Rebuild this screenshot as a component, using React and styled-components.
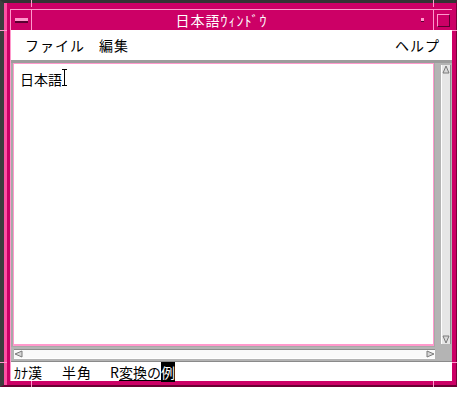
import React from 'react';
import styled, { createGlobalStyle } from 'styled-components';

const Global = createGlobalStyle`
  html, body { margin: 0; padding: 0; background: #fff; }
  body { font-family: "Noto Sans CJK JP", "Noto Sans", sans-serif; }
`;

const MAG = '#cc0066';
const PINK = '#ff99cc';

const Frame = styled.div`
  position: relative;
  box-sizing: border-box;
  width: 457px;
  height: 387px;
  border-top: 3px solid #333;
  border-left: 4px solid #3d3d3d;
  border-right: 1px solid #7a0038;
  border-bottom: 2px solid #6a0033;
  background: linear-gradient(to right, #ff4fa3 0 3px, ${MAG} 3px);
  padding: 6px 4px 4px 6px;
  display: flex;
`;

const Tick = styled.span`
  position: absolute;
  background: ${PINK};
  ${(p) => (p.$v ? `width:1px; height:${p.$len}px;` : `height:1px; width:${p.$len}px;`)}
  left: ${(p) => p.$x}px;
  top: ${(p) => p.$y}px;
`;

const Inner = styled.div`
  flex: 1;
  min-width: 0;
  display: flex;
  flex-direction: column;
  border-top: 1px solid ${PINK};
  border-left: 1px solid ${PINK};
`;

const TitleBar = styled.div`
  height: 20px;
  display: flex;
  background: ${MAG};
`;

const WinMenuBtn = styled.div`
  width: 20px;
  border-right: 1px solid ${PINK};
  display: flex;
  align-items: center;
  justify-content: center;
`;

const MenuGlyph = styled.span`
  width: 13px;
  height: 3px;
  background: ${PINK};
  border-bottom: 2px solid #5a0030;
`;

const Title = styled.div`
  flex: 1;
  color: #fff;
  font-size: 14px;
  line-height: 20px;
  text-align: center;
  letter-spacing: 1px;
`;

const MinBtn = styled.div`
  width: 22px;
  border-right: 1px solid ${PINK};
  display: flex;
  align-items: center;
  justify-content: center;
`;

const Dot = styled.span`
  width: 3px;
  height: 3px;
  background: ${PINK};
  border-bottom: 1px solid #5a0030;
`;

const MaxBtn = styled.div`
  flex: 0 0 18px;
  display: flex;
  align-items: center;
  justify-content: center;
`;

const Square = styled.span`
  width: 11px;
  height: 11px;
  border: 1px solid ${PINK};
  border-right-color: #5a0030;
  border-bottom-color: #5a0030;
`;

const MenuBar = styled.div`
  height: 30px;
  background: #fff;
  display: flex;
  align-items: center;
  padding: 0 12px 0 14px;
  gap: 14px;
  font-size: 14px;
  letter-spacing: 1px;
  color: #000;
`;

const MenuItem = styled.span`
  margin-left: ${(p) => (p.$right ? 'auto' : '0')};
`;

const Separator = styled.div`
  height: 3px;
  background: #9c9c9c;
`;

const Client = styled.div`
  flex: 1;
  display: grid;
  grid-template-columns: 1fr 17px;
  grid-template-rows: 1fr 14px;
  background: #b4b4b4;
  min-height: 0;
`;

const TextWrap = styled.div`
  padding: 0 1px 1px 2px;
  background: #a8a8a8;
  display: flex;
`;

const TextArea = styled.div`
  flex: 1;
  background: #fff;
  border: 1px solid ${PINK};
  border-bottom-width: 2px;
  padding: 6px 6px;
  font-size: 14px;
  line-height: 18px;
  color: #000;
  display: flex;
  align-items: flex-start;
`;

const Cursor = styled.svg`
  display: block;
  margin-top: -1px;
`;

const VScroll = styled.div`
  display: flex;
  justify-content: flex-end;
  padding: 2px 1px 3px 0;
`;

const VTrough = styled.div`
  width: 8px;
  background: #e6e6e6;
  border-left: 1px solid #fff;
  border-right: 1px solid #8c8c8c;
  display: flex;
  flex-direction: column;
  justify-content: space-between;
  align-items: center;
`;

const HScroll = styled.div`
  display: flex;
  align-items: center;
  padding: 0 0 0 3px;
`;

const HTrough = styled.div`
  flex: 1;
  height: 8px;
  background: #fafafa;
  border-top: 1px solid #8c8c8c;
  border-bottom: 1px solid #fff;
  display: flex;
  align-items: center;
  justify-content: space-between;
`;

const Corner = styled.div`
  background: #b4b4b4;
`;

const StatusBar = styled.div`
  height: 19px;
  border-top: 1px solid #8a8a8a;
  background: #fff;
  display: flex;
  align-items: center;
  padding-left: 3px;
  font-size: 14px;
  color: #000;
  white-space: nowrap;
`;

const Seg = styled.span`
  width: ${(p) => p.$w}px;
  flex: 0 0 auto;
  letter-spacing: ${(p) => p.$ls || 0}px;
`;

const Under = styled.span`
  text-decoration: underline;
  text-underline-offset: 2px;
`;

const Inverse = styled.span`
  background: #000;
  color: #fff;
`;

function Arrow({ dir }) {
  const pts = {
    up: '4,1 7,8 1,8',
    down: '1,1 7,1 4,8',
    left: '1,4 8,1 8,7',
    right: '8,4 1,1 1,7',
  }[dir];
  return (
    <svg width="9" height="9" viewBox="0 0 9 9">
      <polygon points={pts} fill="#d8d8d8" stroke="#7a7a7a" strokeWidth="1" />
    </svg>
  );
}

export default function App() {
  return (
    <>
      <Global />
      <Frame>
        <Tick $v $len={7} $x={27} $y={-3} />
        <Tick $v $len={7} $x={429} $y={-3} />
        <Tick $v $len={6} $x={27} $y={378} />
        <Tick $v $len={6} $x={429} $y={378} />
        <Tick $len={7} $x={-4} $y={27} />
        <Tick $len={7} $x={-4} $y={359} />
        <Tick $len={5} $x={448} $y={27} />
        <Tick $len={5} $x={448} $y={359} />
        <Inner>
          <TitleBar>
            <WinMenuBtn><MenuGlyph /></WinMenuBtn>
            <Title>日本語ｳｨﾝﾄﾞｳ</Title>
            <MinBtn><Dot /></MinBtn>
            <MaxBtn><Square /></MaxBtn>
          </TitleBar>
          <MenuBar>
            <MenuItem>ファイル</MenuItem>
            <MenuItem>編集</MenuItem>
            <MenuItem $right>ヘルプ</MenuItem>
          </MenuBar>
          <Separator />
          <Client>
            <TextWrap>
              <TextArea>
                日本語
                <Cursor width="6" height="17" viewBox="0 0 6 17">
                  <path d="M0 0.5H5M2.5 0.5V16.5M0 16.5H5" stroke="#000" strokeWidth="1" fill="none" />
                </Cursor>
              </TextArea>
            </TextWrap>
            <VScroll>
              <VTrough>
                <Arrow dir="up" />
                <Arrow dir="down" />
              </VTrough>
            </VScroll>
            <HScroll>
              <HTrough>
                <Arrow dir="left" />
                <Arrow dir="right" />
              </HTrough>
            </HScroll>
            <Corner />
          </Client>
          <StatusBar>
            <Seg $w={48}>ｶﾅ漢</Seg>
            <Seg $w={48} $ls={1}>半角</Seg>
            <Seg>
              R<Under>変換の</Under><Inverse>例</Inverse>
            </Seg>
          </StatusBar>
        </Inner>
      </Frame>
    </>
  );
}
